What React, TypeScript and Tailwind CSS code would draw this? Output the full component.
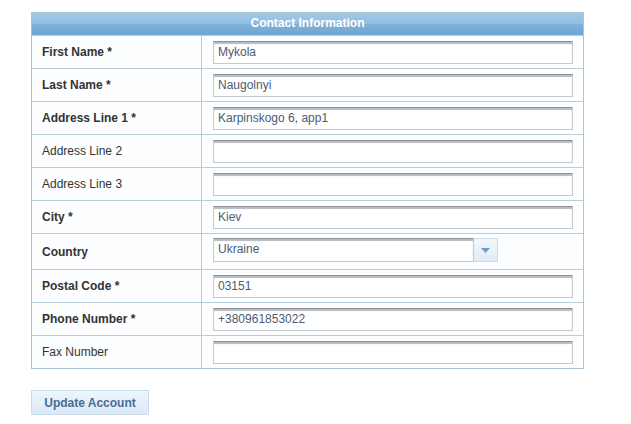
import React from "react";

interface Field {
  label: string;
  required?: boolean;
  bold?: boolean;
  value: string;
  select?: boolean;
}

const fields: Field[] = [
  { label: "First Name", required: true, value: "Mykola" },
  { label: "Last Name", required: true, value: "Naugolnyi" },
  { label: "Address Line 1", required: true, value: "Karpinskogo 6, app1" },
  { label: "Address Line 2", value: "" },
  { label: "Address Line 3", value: "" },
  { label: "City", required: true, value: "Kiev" },
  { label: "Country", bold: true, value: "Ukraine", select: true },
  { label: "Postal Code", required: true, value: "03151" },
  { label: "Phone Number", required: true, value: "+380961853022" },
  { label: "Fax Number", value: "" },
];

function TextBox({ value }: { value: string }) {
  return (
    <div className="h-[23px] w-[360px] border border-[#c3cbd0] border-t-[#8f9396] bg-white pl-[4px] text-[12px] leading-[21px] text-[#4d5b73] shadow-[inset_0_2px_1px_#b8bcbf]">
      {value}
    </div>
  );
}

function SelectBox({ value }: { value: string }) {
  return (
    <div className="mb-[3px] flex h-[24px] w-[285px]">
      <div className="flex-1 border border-[#c3cbd0] border-t-[#8f9396] bg-white pl-[4px] text-[12px] leading-[20px] text-[#4d5b73] shadow-[inset_0_2px_1px_#b8bcbf]">
        {value}
      </div>
      <div className="flex w-[24px] items-center justify-center border border-l-0 border-[#c8dcea] bg-gradient-to-b from-[#f1f7fc] to-[#dfecf7]">
        <svg width="9" height="5" viewBox="0 0 9 5">
          <path d="M0 0 H9 L4.5 5 Z" fill="#6c9cc8" />
        </svg>
      </div>
    </div>
  );
}

export default function App() {
  return (
    <div className="min-h-[424px] bg-white pl-[31px] pt-[12px] font-['Liberation_Sans',Arial,sans-serif]">
      <div className="w-[553px] border border-[#a9c4d6] bg-[#fdfeff]">
        <div className="relative h-[22px] overflow-hidden bg-gradient-to-b from-[#92c0e2] to-[#6fa5d2] text-center text-[12px] font-bold leading-[21px] text-white">
          <div className="absolute inset-x-0 top-0 h-[11px] bg-white/15" />
          <span className="relative">Contact Information</span>
        </div>
        {fields.map((f) => (
          <div
            key={f.label}
            className={`flex border-t border-[#b9ccd9] ${f.select ? "h-[36px]" : "h-[33px]"}`}
          >
            <div
              className={`flex w-[170px] items-center border-r border-[#b9ccd9] pl-[10px] text-[12px] text-[#333] ${
                f.required || f.bold ? "font-bold" : ""
              }`}
            >
              {f.label}
              {f.required ? " *" : ""}
            </div>
            <div className="flex flex-1 items-center pl-[11px]">
              {f.select ? <SelectBox value={f.value} /> : <TextBox value={f.value} />}
            </div>
          </div>
        ))}
      </div>
      <button
        type="button"
        className="mt-[21px] h-[25px] w-[118px] border border-[#c7dced] bg-gradient-to-b from-[#eef5fc] to-[#dce9f6] text-[12px] font-bold text-[#456d94]"
      >
        Update Account
      </button>
    </div>
  );
}
